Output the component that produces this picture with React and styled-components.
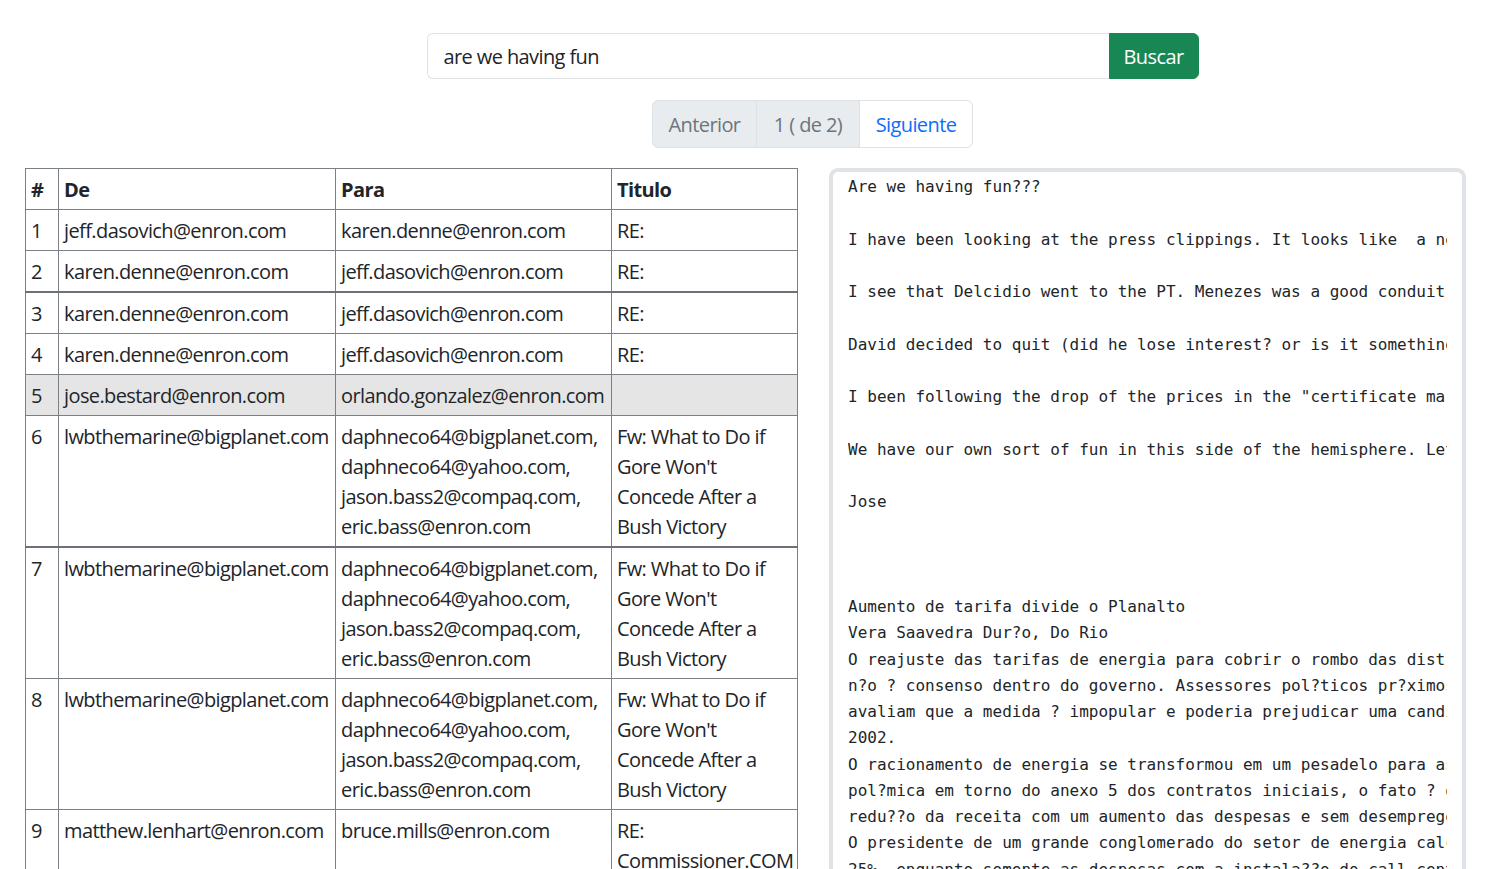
import React from "react";
import styled, { createGlobalStyle } from "styled-components";

const Global = createGlobalStyle`
  html, body { margin: 0; padding: 0; background: #fff; }
  body {
    font-family: "Segoe UI", "Open Sans", "Noto Sans", sans-serif;
    font-size: 20px;
    line-height: 1.5;
    letter-spacing: -0.6px;
    color: #212529;
    overflow: hidden;
  }
  * { box-sizing: border-box; }
`;

const Page = styled.div`
  display: flex;
  flex-direction: column;
  padding-top: 33px;
`;

const Centered = styled.div`
  display: flex;
  justify-content: center;
  padding-left: 125px;
  margin-bottom: ${(p) => p.$mb || 0}px;
`;

const SearchGroup = styled.form`
  display: flex;
  width: 772px;
  height: 46px;
`;

const SearchInput = styled.input`
  flex: 1;
  min-width: 0;
  border: 1px solid #dee2e6;
  border-right: none;
  border-radius: 6px 0 0 6px;
  padding: 2px 16px 0;
  font: inherit;
  font-size: 20px;
  letter-spacing: -0.6px;
  color: #212529;
  outline: none;
`;

const SearchButton = styled.button`
  width: 90px;
  padding: 2px 0 0;
  border: 1px solid #198754;
  background: #198754;
  color: #fff;
  font: inherit;
  font-size: 20px;
  letter-spacing: -0.6px;
  border-radius: 0 6px 6px 0;
  cursor: pointer;
`;

const Pager = styled.ul`
  display: flex;
  list-style: none;
  margin: 0;
  padding: 0;
  height: 48px;
`;

const PageItem = styled.li`
  display: flex;
  align-items: center;
  justify-content: center;
  padding-top: 2px;
  width: ${(p) => p.$w}px;
  border: 1px solid #dee2e6;
  margin-left: -1px;
  background: ${(p) => (p.$active ? "#fff" : "#e9ecef")};
  color: ${(p) => (p.$active ? "#0d6efd" : "#6c757d")};
  &:first-child { border-radius: 6px 0 0 6px; margin-left: 0; }
  &:last-child { border-radius: 0 6px 6px 0; }
`;

const Main = styled.div`
  display: grid;
  grid-template-columns: 772px 637px;
  column-gap: 32px;
  padding-left: 25px;
  align-items: start;
`;

const Table = styled.table`
  border-collapse: collapse;
  table-layout: fixed;
  width: 772px;
`;

const Col = styled.col`
  width: ${(p) => p.$w}px;
`;

const Th = styled.th`
  text-align: left;
  font-weight: 700;
  padding: 6px 5px 4px;
  border: 1px solid #7b8086;
  vertical-align: top;
  white-space: nowrap;
`;

const Tr = styled.tr`
  background: ${(p) => (p.$active ? "#e5e5e5" : "#fff")};
  border-bottom: ${(p) => (p.$thick ? "2px solid #6c7177" : "1px solid #7b8086")};
`;

const Td = styled.td`
  padding: 6px 5px 4px;
  border-left: 1px solid #7b8086;
  border-right: 1px solid #7b8086;
  vertical-align: top;
  white-space: nowrap;
  overflow: hidden;
`;

const MailBox = styled.div`
  border: 4px solid #dfe2e6;
  border-radius: 9px;
  padding: 1px 15px 0 15px;
  height: 760px;
  background: #fff;
`;

const Pre = styled.pre`
  margin: 0;
  padding-top: 1px;
  overflow: hidden;
  font-family: "DejaVu Sans Mono", "Liberation Mono", monospace;
  font-size: 16px;
  letter-spacing: 0;
  line-height: 26.25px;
  color: #212529;
  white-space: pre;
`;

const fw = {
  de: ["lwbthemarine@bigplanet.com"],
  para: ["daphneco64@bigplanet.com,", "daphneco64@yahoo.com,", "jason.bass2@compaq.com,", "eric.bass@enron.com"],
  t: ["Fw: What to Do if", "Gore Won't", "Concede After a", "Bush Victory"],
};

const rows = [
  { n: 1, de: ["jeff.dasovich@enron.com"], para: ["karen.denne@enron.com"], t: ["RE:"] },
  { n: 2, de: ["karen.denne@enron.com"], para: ["jeff.dasovich@enron.com"], t: ["RE:"], thick: true },
  { n: 3, de: ["karen.denne@enron.com"], para: ["jeff.dasovich@enron.com"], t: ["RE:"] },
  { n: 4, de: ["karen.denne@enron.com"], para: ["jeff.dasovich@enron.com"], t: ["RE:"] },
  { n: 5, de: ["jose.bestard@enron.com"], para: ["orlando.gonzalez@enron.com"], t: [""], active: true },
  { n: 6, ...fw, thick: true },
  { n: 7, ...fw },
  { n: 8, ...fw },
  { n: 9, de: ["matthew.lenhart@enron.com"], para: ["bruce.mills@enron.com"], t: ["RE:", "Commissioner.COM"] },
  { n: 10, de: ["jeff.dasovich@enron.com"], para: ["karen.denne@enron.com"], t: ["RE:"] },
];

const Lines = ({ lines }) =>
  lines.map((l, i) => (
    <React.Fragment key={i}>
      {i > 0 && <br />}
      {l}
    </React.Fragment>
  ));

const mail = `Are we having fun???

I have been looking at the press clippings. It looks like  a new government is coming.

I see that Delcidio went to the PT. Menezes was a good conduit for the company.

David decided to quit (did he lose interest? or is it something else?)

I been following the drop of the prices in the "certificate market" lately.

We have our own sort of fun in this side of the hemisphere. Let me know.

Jose



Aumento de tarifa divide o Planalto
Vera Saavedra Dur?o, Do Rio
O reajuste das tarifas de energia para cobrir o rombo das distribuidoras
n?o ? consenso dentro do governo. Assessores pol?ticos pr?ximos ao Planalto
avaliam que a medida ? impopular e poderia prejudicar uma candidatura em
2002.
O racionamento de energia se transformou em um pesadelo para as empresas. A
pol?mica em torno do anexo 5 dos contratos iniciais, o fato ? que houve
redu??o da receita com um aumento das despesas e sem desemprego no setor.
O presidente de um grande conglomerado do setor de energia calcula perdas de
25%, enquanto somente as despesas com a instala??o do call center subiram.
`;

export default function App() {
  return (
    <Page>
      <Global />
      <Centered $mb={21}>
        <SearchGroup onSubmit={(e) => e.preventDefault()}>
          <SearchInput defaultValue="are we having fun" />
          <SearchButton type="submit">Buscar</SearchButton>
        </SearchGroup>
      </Centered>
      <Centered $mb={20}>
        <Pager>
          <PageItem $w={105}>Anterior</PageItem>
          <PageItem $w={104}>1 ( de 2)</PageItem>
          <PageItem $w={114} $active>Siguiente</PageItem>
        </Pager>
      </Centered>
      <Main>
        <Table>
          <colgroup>
            <Col $w={33} />
            <Col $w={277} />
            <Col $w={276} />
            <Col $w={186} />
          </colgroup>
          <thead>
            <tr>
              <Th>#</Th>
              <Th>De</Th>
              <Th>Para</Th>
              <Th>Titulo</Th>
            </tr>
          </thead>
          <tbody>
            {rows.map((r) => (
              <Tr key={r.n} $active={r.active} $thick={r.thick}>
                <Td>{r.n}</Td>
                <Td><Lines lines={r.de} /></Td>
                <Td><Lines lines={r.para} /></Td>
                <Td><Lines lines={r.t} /></Td>
              </Tr>
            ))}
          </tbody>
        </Table>
        <MailBox>
          <Pre>{mail}</Pre>
        </MailBox>
      </Main>
    </Page>
  );
}
